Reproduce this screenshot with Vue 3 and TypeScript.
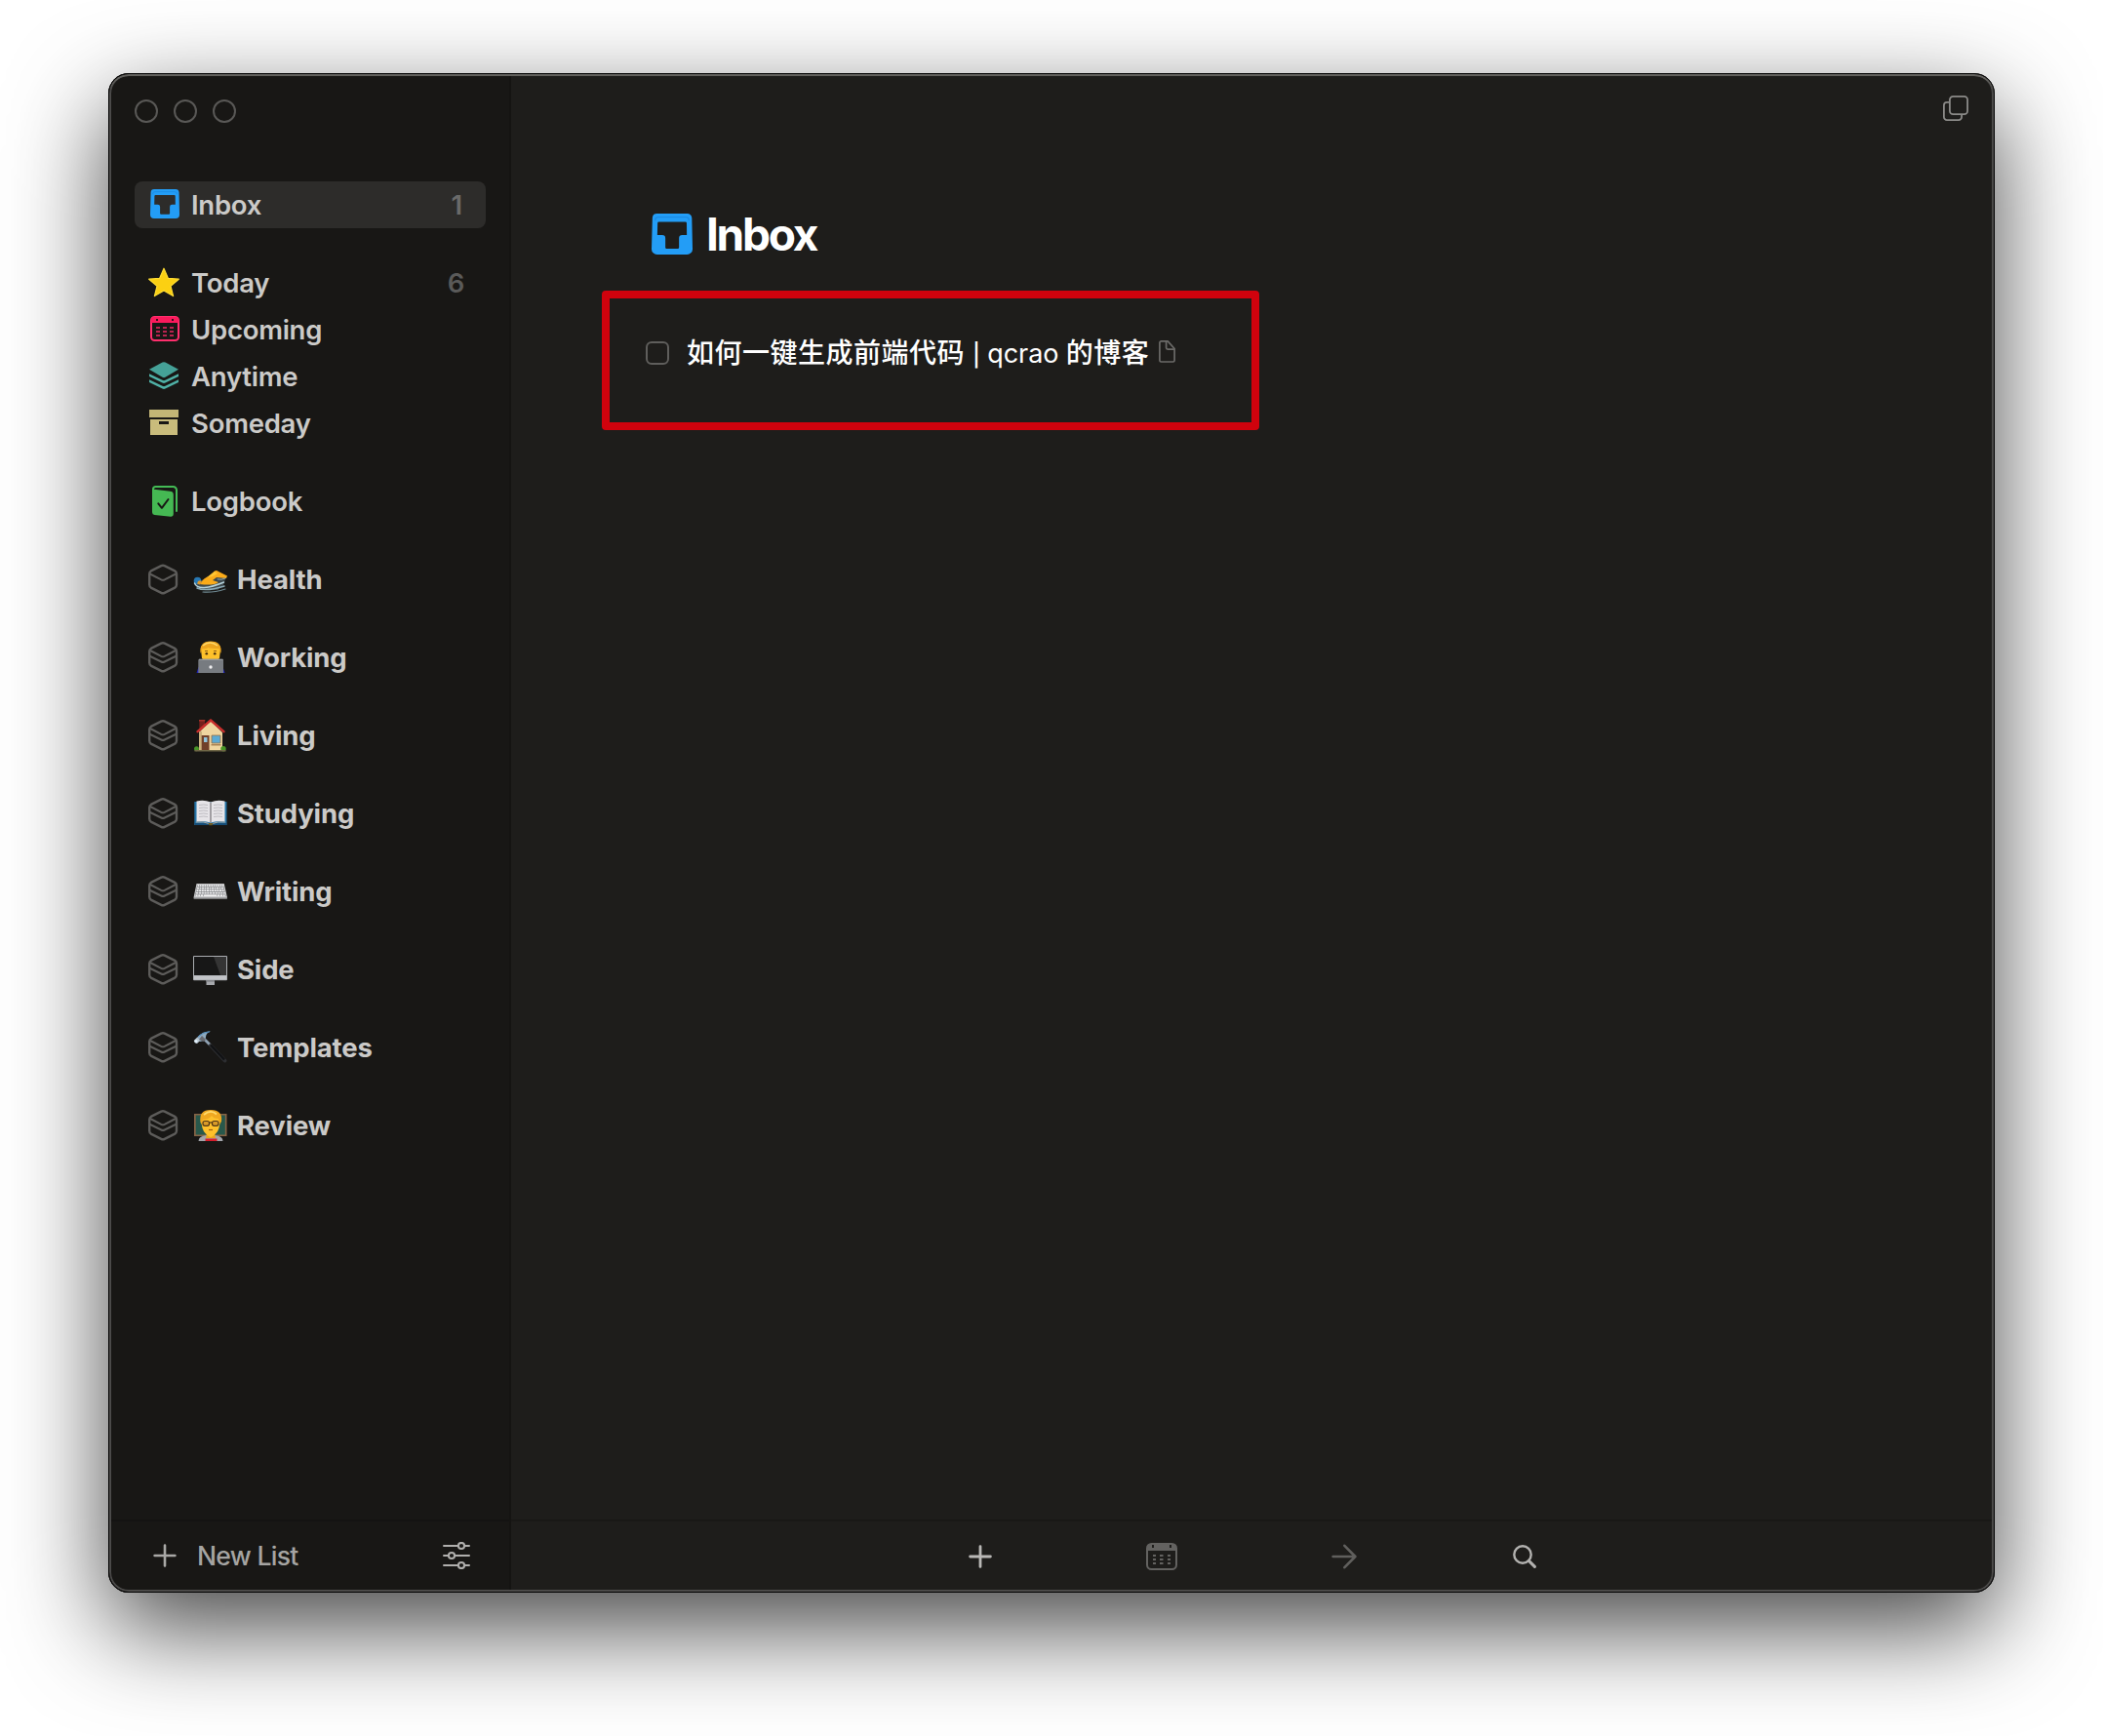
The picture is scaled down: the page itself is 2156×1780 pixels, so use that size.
<script setup lang="ts">
interface NavItem {
  id: string
  label: string
  icon: string
  count?: number
  active?: boolean
}

interface Area {
  id: string
  label: string
  icon: string
}

const groups: NavItem[][] = [
  [{ id: 'inbox', label: 'Inbox', icon: 'inbox', count: 1, active: true }],
  [
    { id: 'today', label: 'Today', icon: 'star', count: 6 },
    { id: 'upcoming', label: 'Upcoming', icon: 'upcoming' },
    { id: 'anytime', label: 'Anytime', icon: 'layers' },
    { id: 'someday', label: 'Someday', icon: 'archive' },
  ],
  [{ id: 'logbook', label: 'Logbook', icon: 'logbook' }],
]

const areas: Area[] = [
  { id: 'swimmer', label: 'Health', icon: 'area-empty' },
  { id: 'worker', label: 'Working', icon: 'area' },
  { id: 'house', label: 'Living', icon: 'area' },
  { id: 'book', label: 'Studying', icon: 'area' },
  { id: 'keyboard', label: 'Writing', icon: 'area' },
  { id: 'monitor', label: 'Side', icon: 'area' },
  { id: 'hammer', label: 'Templates', icon: 'area' },
  { id: 'teacher', label: 'Review', icon: 'area' },
]
</script>

<template>
  <div class="desktop">
    <div class="window">
      <aside class="sidebar">
        <div class="lights"><i></i><i></i><i></i></div>
        <nav class="nav">
          <ul v-for="(group, g) in groups" :key="g" class="group">
            <li v-for="item in group" :key="item.id" class="row" :class="{ active: item.active }">
              <svg class="icon" viewBox="0 0 32 32"><use :href="'#i-' + item.icon" /></svg>
              <span class="label">{{ item.label }}</span>
              <span v-if="item.count" class="count">{{ item.count }}</span>
            </li>
          </ul>
          <ul v-for="area in areas" :key="area.id" class="group">
            <li class="row area">
              <svg class="icon" viewBox="0 0 32 32"><use :href="'#i-' + area.icon" /></svg>
              <svg class="emoji" viewBox="0 0 36 36"><use :href="'#e-' + area.id" /></svg>
              <span class="label">{{ area.label }}</span>
            </li>
          </ul>
        </nav>
        <footer class="side-foot">
          <svg class="plus" viewBox="0 0 24 24"><path d="M12 1.6v20.8M1.6 12h20.8" fill="none" stroke="#a9a8a6" stroke-width="2.6" stroke-linecap="round" /></svg>
          <span class="new-list">New List</span>
          <svg class="sliders" viewBox="0 0 28 28" fill="none" stroke="#b0afad" stroke-width="2" stroke-linecap="round">
            <path d="M1 4h15M22 4h5M1 14h5M12 14h15M1 24h15M22 24h5" />
            <circle cx="19" cy="4" r="3.1" /><circle cx="9" cy="14" r="3.1" /><circle cx="19" cy="24" r="3.1" />
          </svg>
        </footer>
      </aside>

      <main class="main">
        <header class="top">
          <svg class="copy" viewBox="0 0 26 26" fill="none" stroke="#8b8a88" stroke-width="1.8">
            <rect x="6.9" y=".9" width="18.2" height="18.2" rx="3.4" />
            <path d="M6.5 6.9H4A3.1 3.1 0 0 0 .9 10v12A3.1 3.1 0 0 0 4 25.1h12a3.1 3.1 0 0 0 3.1-3.1v-2.5" />
          </svg>
        </header>
        <section class="content">
          <h1 class="title">
            <svg viewBox="2 0 30 30"><use href="#i-inbox" width="32" height="32" /></svg>
            <span>Inbox</span>
          </h1>
          <div class="task">
            <span class="check"></span>
            <span class="task-text">如何一键生成前端代码 <span class="latin"><span class="bar">|</span> qcrao </span>的博客</span>
            <svg class="doc" viewBox="0 0 17 23" fill="none" stroke="#6b6a68" stroke-width="1.7" stroke-linejoin="round">
              <path d="M2.6.9h6.6l6.9 7.6v11.9a1.6 1.6 0 0 1-1.6 1.6H2.5a1.6 1.6 0 0 1-1.6-1.6V2.5A1.6 1.6 0 0 1 2.6.9z" />
              <path d="M7.6 1v6.6a1.6 1.6 0 0 0 1.6 1.6h6.7" />
            </svg>
            <div class="callout"></div>
          </div>
        </section>
        <footer class="toolbar">
          <span class="tool"><svg width="24" height="24" viewBox="0 0 24 24"><path d="M12 1.6v20.8M1.6 12h20.8" fill="none" stroke="#b9b8b6" stroke-width="2.8" stroke-linecap="round" /></svg></span>
          <span class="tool">
            <svg width="32" height="28" viewBox="0 0 32 28">
              <rect x="1" y="1" width="30" height="26" rx="4.5" fill="none" stroke="#636260" stroke-width="2" />
              <path d="M1 8V5a4 4 0 0 1 4-4h22a4 4 0 0 1 4 4v3z" fill="#636260" />
              <path d="M6 2h2v3H6zM24 2h2v3h-2z" fill="#1e1d1b" />
              <path d="M7 12h3v2H7zm7 0h3.500v2H14zm8 0h3v2h-3zM7 16h3v2H7zm7 0h3.500v2H14zm8 0h3v2h-3zM7 20h3v2H7zm7 0h3.500v2H14zm8 0h3v2h-3z" fill="#636260" />
            </svg>
          </span>
          <span class="tool"><svg width="26" height="26" viewBox="0 0 26 26"><path d="M1.600 13h22.500M13.400 1.800 24.400 13 13.400 24.200" fill="none" stroke="#605f5d" stroke-width="2.600" stroke-linecap="round" stroke-linejoin="round" /></svg></span>
          <span class="tool"><svg class="search" width="24" height="24" viewBox="0 0 24 24" fill="none" stroke="#b2b1af" stroke-linecap="round"><circle cx="10" cy="10" r="8.700" stroke-width="2.400" /><path d="M16.400 16.400l6 6" stroke-width="3" /></svg></span>
        </footer>
      </main>
    </div>

    <svg class="sprites" aria-hidden="true">
      <symbol id="i-inbox" viewBox="0 0 32 32" overflow="visible">
        <path fill="#239df6" fill-rule="evenodd" d="M6 0h22a3.600 3.600 0 0 1 3.500 3.200L32 26a4 4 0 0 1-4 4H6a4 4 0 0 1-4-4l.6-22.800A3.400 3.400 0 0 1 6 0zM7.400 6a1 1 0 0 0-1 1L6.200 15.700H9.800a2.300 2.300 0 0 1 2.300 2.300v6.800a1 1 0 0 0 1 1h8a1 1 0 0 0 1-1V18a2.300 2.300 0 0 1 2.300-2.300h3.400L27.700 7a1 1 0 0 0-1-1z" />
        <path d="M4.700 5.200V4.200a2 2 0 0 1 2-1.600h20.600a2 2 0 0 1 2 1.600v1" fill="none" stroke="#1b8be4" stroke-width=".9" />
      </symbol>
      <symbol id="i-star" viewBox="0 0 32 32">
        <path d="M16 1.200l4.300 10.100 11 .9-8.300 7.200 2.600 10.200L16 24l-9.600 5.600L9 19.400.7 12.200l11-.9z" fill="#fbd012" stroke="#ffdd33" stroke-width="1.200" stroke-linejoin="round" />
      </symbol>
      <symbol id="i-upcoming" viewBox="0 0 32 32">
        <rect x="3" y="3" width="28" height="24" rx="3.500" fill="none" stroke="#ff2f6d" stroke-width="2" />
        <path d="M3 9V6a3 3 0 0 1 3-3h22a3 3 0 0 1 3 3v3z" fill="#fb1a5c" />
        <path d="M8 5h2v2H8zM24 5h2v2h-2z" fill="#33121c" />
        <path d="M8 13h4v2H8zm7 0h4v2h-4zm7 0h4v2h-4zM8 17h4v2H8zm7 0h4v2h-4zm7 0h4v2h-4zM8 21h4v2H8zm7 0h4v2h-4zm7 0h4v2h-4z" fill="#b9234f" />
      </symbol>
      <symbol id="i-layers" viewBox="0 0 32 32">
        <path d="M14.500 1.500q1.500-.7 3 0L31 8.800 17.500 16.800q-1.500.8-3 0L1 8.800z" fill="#45a197" />
        <path d="M1 13.200v2.800l13.500 6.600q1.500.7 3 0L31 16v-2.800l-13.500 6.600q-1.500.7-3 0zM1 19.200V22l13.500 6.600q1.500.7 3 0L31 22v-2.800l-13.500 6.600q-1.500.7-3 0z" fill="#4fb1a6" />
      </symbol>
      <symbol id="i-archive" viewBox="0 0 32 32">
        <path d="M1 2h30v8H1z" fill="#c2b576" />
        <path fill-rule="evenodd" d="M2 12h28v16H2zM11 14v3h10v-3z" fill="#c9bc7c" />
      </symbol>
      <symbol id="i-logbook" viewBox="0 0 32 32">
        <path d="M5 8V3.500A2.400 2.400 0 0 1 7.400 1H25.500A3.500 3.500 0 0 1 29 4.500V26" fill="none" stroke="#44bb55" stroke-width="2" stroke-linecap="round" />
        <path d="M4 3.600l18.500 2.200A3.600 3.600 0 0 1 25.800 9.400V29a2.600 2.600 0 0 1-2.800 2.700L6.500 30A2.800 2.800 0 0 1 4 27.300z" fill="#45b853" />
        <path d="M10.300 18.300l3.600 4.500 6.600-8.800" fill="none" stroke="#181715" stroke-width="2" stroke-linecap="round" stroke-linejoin="round" />
      </symbol>
      <symbol id="i-area-empty" viewBox="0 0 32 32">
        <g fill="none" stroke="#5d5c5a" stroke-width="2.400" stroke-linejoin="round">
          <path d="M13.300 2.200q1.700-.8 3.400 0L27.200 7.400q1.800 1 1.800 3V21.600q0 2-1.800 3L16.700 29.800q-1.700.8-3.400 0L2.800 24.600Q1.200 23.600 1.200 21.600V10.400q0-2 1.600-3z" />
          <path d="M1.800 10.500L13.300 16.400q1.700.8 3.400 0L28.200 10.500" stroke-width="2.100" />
        </g>
      </symbol>
      <symbol id="i-area" viewBox="0 0 32 32">
        <g fill="none" stroke="#5d5c5a" stroke-width="2.400" stroke-linejoin="round">
          <path d="M13.300 1.700q1.700-.8 3.400 0L27.200 6.900q1.800 1 1.800 3V21.600q0 2-1.800 3L16.700 29.800q-1.700.8-3.400 0L2.800 24.600Q1.200 23.600 1.200 21.600V9.900q0-2 1.600-3z" />
          <path d="M2 9l11.300 5.900q1.700.8 3.400 0L28 9M1.500 14.700l11.800 5.800q1.700.8 3.400 0l11.800-5.800" stroke-width="2.100" />
        </g>
      </symbol>

      <symbol id="e-swimmer" viewBox="0 0 36 36">
        <path d="M3 22q6-4 14-6t17-1l-3 9-6 5-18-1z" fill="#3c474b" />
        <path d="M7 23q4-7 9-8l6-5.500q2-1 4 .6l9 4.500-1 2.300-10-1-4 3 6 2q-5 4-19 2.100z" fill="#fbab19" />
        <path d="M14 16l8-6 3 2-5 3z" fill="#ffc634" />
        <circle cx="4.500" cy="19.500" r="3.800" fill="#2878b2" /><path d="M5 20q3-2 4 1l-2 2.500-3-1z" fill="#e0982a" />
        <g fill="none" stroke-linecap="round"><path d="M1.500 22q2 5 10 4.500t20-5.500" stroke="#b9d6df" stroke-width="1.500" /><path d="M4 27q9 4 28-2" stroke="#8faeb9" stroke-width="1.500" /><path d="M10 31q10 1 23-3" stroke="#6f8992" stroke-width="1.200" /><path d="M25 18q4 1 8-1" stroke="#89a5ae" /></g>
      </symbol>
      <symbol id="e-worker" viewBox="0 0 36 36">
        <path d="M3.500 34l2-6h25l2 6z" fill="#1e22bd" />
        <path d="M8 10q0-8 10-8t10 8l-1 9-4 4H13l-4-4z" fill="#fec12b" />
        <path d="M7.500 14Q6 1.500 18 1.500T28.500 14l-2-5q-9 0-11-1-3 2-6 1z" fill="#eda51f" /><path d="M10 6q7-6 15 0" fill="none" stroke="#ffd96a" stroke-width="1.500" />
        <path d="M12 11.500h3m6 0h3" stroke="#946016" stroke-width="1.200" /><circle cx="13.800" cy="14.300" r="1.300" fill="#4b310d" /><circle cx="22.200" cy="14.300" r="1.300" fill="#4b310d" />
        <path d="M5.300 21q0-1.300 1.300-1.300h23.100q1.300 0 1.300 1.300v13H5.300z" fill="#777b80" /><path d="M6 20.300h24.500" stroke="#9fa3a7" /><circle cx="18" cy="28" r="1.700" fill="#f0f0f0" />
      </symbol>
      <symbol id="e-house" viewBox="0 0 36 36">
        <path d="M6.300 2h5.700v9l-5.700 4z" fill="#74201c" /><path d="M6 2h6.300v1.500H6z" fill="#a4332b" />
        <path d="M18 3l12 12v19H6V15z" fill="#efd5a0" /><path d="M6 14h3v20H6z" fill="#ccb17e" />
        <path d="M18 2.500L4.500 14.200M18 2.500l13.500 11.700" fill="none" stroke="#c92e2c" stroke-width="2.400" stroke-linecap="round" />
        <path d="M8.700 18h7.800v15H8.700z" fill="#70402a" /><path d="M11 20h3.500v5H11z" fill="#91c5dc" /><path d="M19 18h9v8h-9z" fill="#5baad4" stroke="#996f43" stroke-width=".8" /><path d="M18.500 27h10v1.500h-10z" fill="#aa8455" />
        <circle cx="3.500" cy="31.800" r="2.500" fill="#489527" /><circle cx="31" cy="31.800" r="2.700" fill="#489527" /><path d="M1.500 33h32v1.500h-32z" fill="#6f6747" />
      </symbol>
      <symbol id="e-book" viewBox="0 0 36 36">
        <path d="M1.300 6h33.200v24H1.300z" fill="#2473a6" /><path d="M2 28h32v2H2z" fill="#154d78" />
        <path d="M3.500 5.500Q11 3.500 18 6.500 25 3.500 32.500 5.500v21Q25 25 18 27.500 11 25 3.500 26.500z" fill="#e6e4e8" />
        <path d="M18 6.500v21" stroke="#908d92" stroke-width="1.600" />
        <path d="M6 9.500q5-1 9 0M6 12.500q5-1 9 0M6 15.500q5-1 9 0M6 18.500q5-1 9 0M6 21.500q5-1 9 0m6-12q5-1 9 0m-9 3q5-1 9 0m-9 3q5-1 9 0m-9 3q5-1 9 0m-9 3q5-1 9 0" fill="none" stroke="#b4b1b8" stroke-width=".8" />
        <path d="M3 27q8-1 13 1.500h4Q25 26 33 27" fill="none" stroke="#a9a69f" /><path d="M15.500 28h5l-1 2.300h-3z" fill="#6b5a21" />
      </symbol>
      <symbol id="e-keyboard" viewBox="0 0 36 36">
        <path d="M3.500 10h28.300l3 13.500v2H.7v-2z" fill="#c9cacb" /><path d="M4.300 11h26.700l2.500 12H2z" fill="#797b7e" />
        <g fill="none" stroke="#f3f3f3" stroke-width="1.800"><path d="M4.500 12.200h26.800" stroke-dasharray="1.800 .5" /><path d="M4 14.700h27.800" stroke-dasharray="2 .5" /><path d="M3.500 17.200h28.800" stroke-dasharray="2.100 .5" /><path d="M3 19.700h29.800" stroke-dasharray="2.300 .5" /><path d="M2.500 22.200h30.800" stroke-dasharray="2.200 .5 2.200 .5 2.200 .5 14 .5" /></g>
        <path d="M.7 24.800h34.100" stroke="#8d8f91" />
      </symbol>
      <symbol id="e-monitor" viewBox="0 0 36 36">
        <path d="M13.500 29h8.500v5h-8.500z" fill="#a6a8ac" /><path d="M13.500 29h8.500v1.500h-8.500z" fill="#74767a" />
        <rect y="4" width="35" height="25.200" rx="1" fill="#a9acb0" /><path d="M.8 24.500h33.400v4H.8z" fill="#c2c4c8" />
        <path d="M1 5h33v19H1z" fill="#171717" /><path d="M21 5h13v19h-6z" fill="#343434" />
      </symbol>
      <symbol id="e-hammer" viewBox="0 0 36 36">
        <path d="M11 9l7 7" stroke="#8fa2b3" stroke-width="2.800" /><path d="M18 16l14.500 15.500" stroke="#2d2e31" stroke-width="4" stroke-linecap="round" /><path d="M18 15.500L32 30.500" stroke="#111214" stroke-width="2.500" />
        <path d="M4 8q5-7 14-6.500-5 1.500-5 6l-1.500 3.500-4.500 1z" fill="#8faabf" /><path d="M5 7q5-5 12-5.200" fill="none" stroke="#4889bc" /><path d="M.7 11l3.500-3.500 3 3.500L4 14q-2.500 0-3.300-3z" fill="#b8c6d0" /><circle cx="3" cy="11.500" r="1.500" fill="#e4f1fb" /><path d="M9 6l4 4-2 2-5-2z" fill="#686a70" />
      </symbol>
      <symbol id="e-teacher" viewBox="0 0 36 36">
        <path d="M1 6h33.500v23H1z" fill="#876446" /><path d="M2.700 7.500h30.100v20H2.700z" fill="#28584b" />
        <path d="M5.500 34q0-5 8-6h9q8 1 8 6z" fill="#a3a5ab" /><path d="M14 26h8l1 5H13z" fill="#e8a61c" />
        <path d="M8.500 12q0-8 9.500-8t9.500 8q0 10-4 14t-5.500 4-5.500-4-4-14z" fill="#fec12b" />
        <path d="M7.500 15Q5.500 2 18 2t11 12l-2 3-1-6q-5 0-7-3-3 4-9 4l-1 5z" fill="#f0a820" /><path d="M11 7q7-6 13-.5" fill="none" stroke="#ffdb6c" stroke-width="1.700" />
        <g fill="#d89a29" stroke="#4e3515" stroke-width="1.200"><rect x="10" y="13.500" width="6.500" height="4.800" rx="2" /><rect x="19.500" y="13.500" width="6.500" height="4.800" rx="2" /><path d="M16.500 15h3" /></g><path d="M16 22.500h4" stroke="#9e6012" stroke-width="1.200" />
        <path d="M12.500 31.500h12V34h-12z" fill="#d61d2b" />
      </symbol>
    </svg>
  </div>
</template>

<style>
html,
body {
  margin: 0;
  background: #fff;
}
</style>

<style scoped>
* {
  box-sizing: border-box;
}
.desktop {
  width: 2156px;
  height: 1780px;
  padding: 75px 111px 147px;
  overflow: hidden;
  background: #fff;
  font-family: Inter, 'Noto Sans CJK SC', sans-serif;
}
svg {
  display: block;
  flex: none;
}
.sprites {
  position: absolute;
  width: 0;
  height: 0;
}
.window {
  position: relative;
  display: flex;
  width: 1934px;
  height: 1558px;
  border-radius: 21px;
  background: #1e1d1b;
  box-shadow: 0 36px 100px rgba(0, 0, 0, 0.73);
}
.window::after {
  content: '';
  position: absolute;
  inset: 0;
  border: 1px solid #000;
  border-radius: 21px;
  box-shadow: inset 0 2px 0 0 #62615d, inset 0 0 0 2px #4b4a49;
  pointer-events: none;
}
.sidebar {
  display: flex;
  flex-direction: column;
  width: 413px;
  border-right: 2px solid #151412;
  border-radius: 21px 0 0 21px;
  background: #181715;
}
.lights {
  display: flex;
  gap: 16px;
  padding: 27px 0 0 27px;
  height: 111px;
}
.lights i {
  width: 24px;
  height: 24px;
  border: 2px solid #595856;
  border-radius: 50%;
}
.nav {
  display: flex;
  flex: 1;
  flex-direction: column;
  gap: 32px;
  padding: 0 24px 0 27px;
}
.group {
  margin: 0;
  padding: 0;
  list-style: none;
}
.row {
  display: flex;
  align-items: center;
  height: 48px;
  padding: 0 22px 0 14px;
  border-radius: 8px;
  color: #cbcac8;
  font-size: 27.5px;
  font-weight: 600;
  line-height: 48px;
  letter-spacing: -0.25px;
  white-space: nowrap;
}
.row.active {
  background: #2d2c2a;
}
.icon {
  width: 32px;
  height: 32px;
}
.label {
  margin-left: 12px;
}
.emoji {
  width: 36px;
  height: 36px;
  margin-left: 14px;
}
.area {
  font-weight: 700;
  letter-spacing: -0.15px;
}
.area .label {
  margin-left: 9px;
}
.count {
  margin-left: auto;
  color: #5a5a59;
}
.active .count {
  margin-right: 2px;
  color: #6a6a69;
}
.side-foot {
  display: flex;
  align-items: center;
  height: 75px;
  padding: 0 40px 3px 46px;
  border-top: 2px solid #141312;
}
.plus {
  width: 24px;
  height: 24px;
}
.new-list {
  flex: 1;
  margin-left: 21px;
  color: #a5a4a2;
  font-size: 26.5px;
  font-weight: 500;
  letter-spacing: -0.7px;
}
.sliders {
  width: 28px;
  height: 28px;
}
.main {
  display: flex;
  flex: 1;
  flex-direction: column;
  min-width: 0;
}
.top {
  display: flex;
  justify-content: flex-end;
  height: 111px;
  padding: 23px 27px 0 0;
}
.copy {
  width: 26px;
  height: 26px;
}
.content {
  flex: 1;
  padding: 25px 0 0 138px;
}
.title {
  display: flex;
  align-items: center;
  height: 58px;
  margin: 0 0 0 6px;
  color: #fff;
  font-size: 46px;
  font-weight: 700;
  line-height: 58px;
  letter-spacing: -2.3px;
}
.title svg {
  width: 42px;
  height: 42px;
  margin-right: 14px;
}
.task {
  position: relative;
  display: flex;
  align-items: center;
  width: 600px;
  height: 48px;
  margin-top: 69px;
}
.check {
  width: 24px;
  height: 24px;
  border: 2px solid #5f5e5c;
  border-radius: 6px;
}
.task-text {
  margin: 2px 0 0 18px;
  color: #fff;
  font-size: 28px;
  font-weight: 500;
  line-height: 48px;
  letter-spacing: 0.5px;
  white-space: nowrap;
}
.latin {
  font-size: 27px;
  font-weight: 400;
  letter-spacing: -0.1px;
}
.bar {
  font-size: 23px;
  font-weight: 500;
}
.doc {
  width: 17px;
  height: 23px;
  margin: 0 0 3px 10px;
}
.callout {
  position: absolute;
  top: -40px;
  left: -45px;
  width: 674px;
  height: 143px;
  border: 8px solid #d0020d;
  border-radius: 4px;
}
.toolbar {
  display: flex;
  align-items: center;
  justify-content: center;
  height: 75px;
  padding-bottom: 1px;
  border-top: 2px solid #191816;
}
.tool {
  display: flex;
  justify-content: center;
  width: 186.3px;
}
.search {
  margin-right: 2px;
}
</style>
